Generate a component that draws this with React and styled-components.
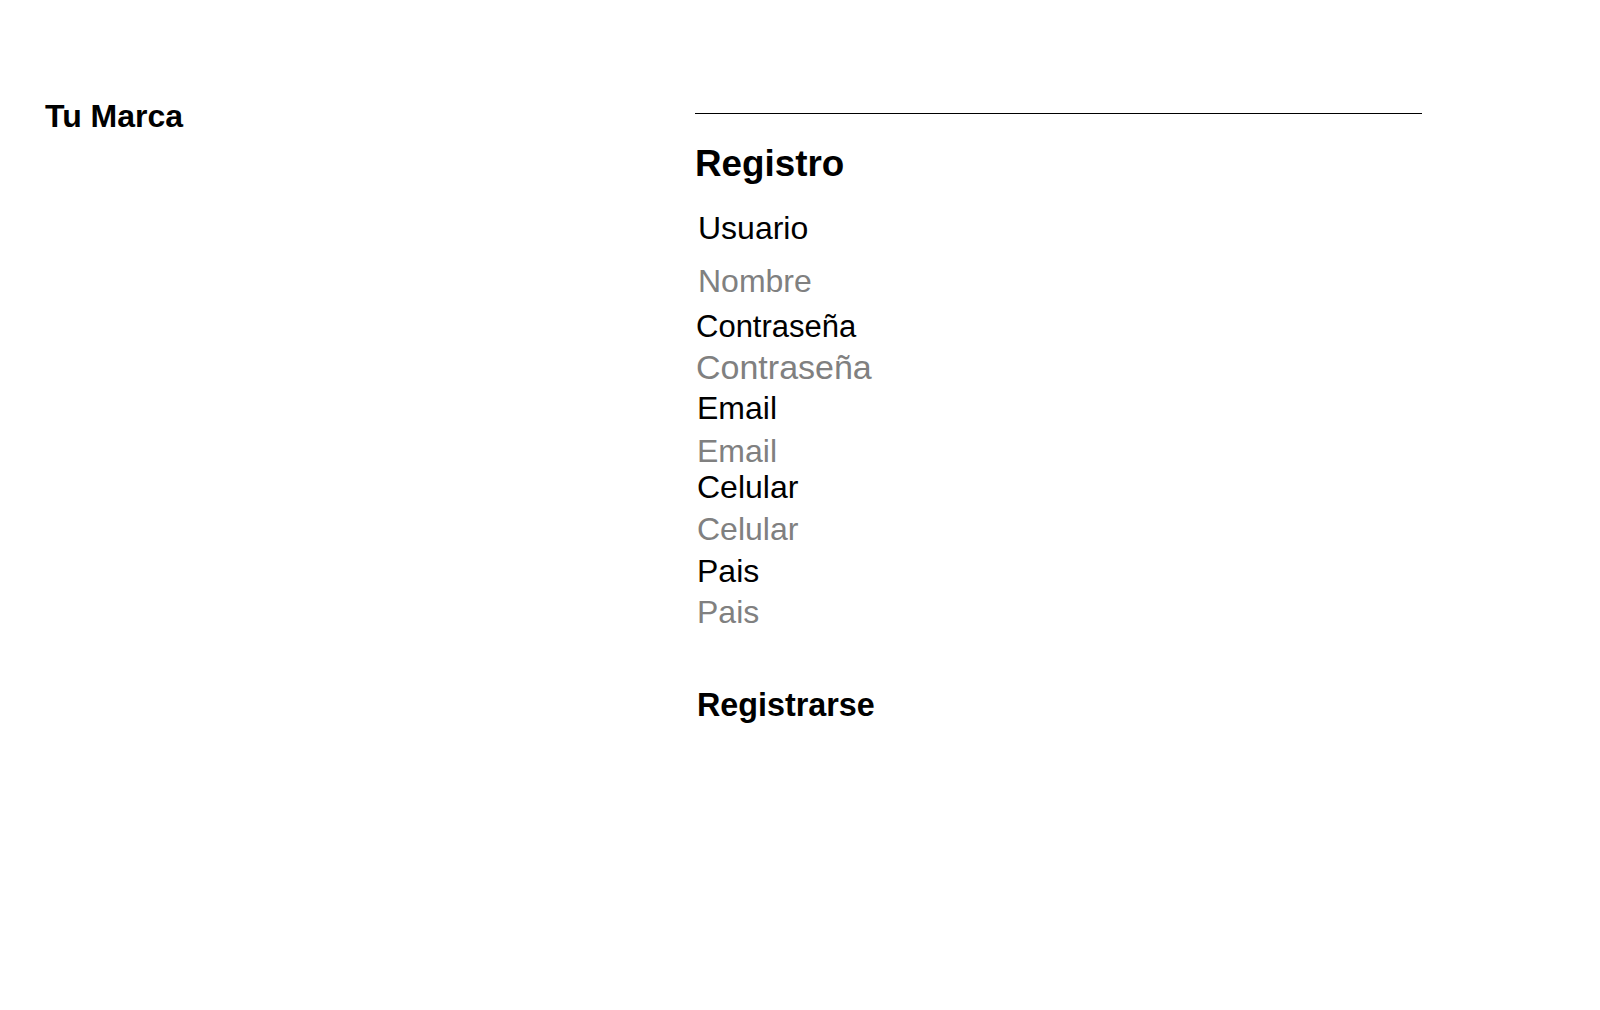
import React from "react";
import styled, { createGlobalStyle } from "styled-components";

const GlobalStyle = createGlobalStyle`
  html, body {
    margin: 0;
    padding: 0;
    background: #ffffff;
  }
  body {
    font-family: "Liberation Sans", Arial, sans-serif;
    color: #000000;
  }
  * { box-sizing: border-box; }
`;

const Page = styled.div`
  display: grid;
  grid-template-columns: 695px 727px;
  min-height: 1010px;
`;

const Brand = styled.header`
  padding: 98px 0 0 45px;
`;

const BrandName = styled.div`
  font-size: 32px;
  line-height: 36px;
  font-weight: 700;
`;

const FormColumn = styled.form`
  margin-top: 113px;
  border-top: 1px solid #000000;
  display: flex;
  flex-direction: column;
  align-items: flex-start;
  align-self: start;
`;

const Title = styled.h2`
  margin: 28px 0 0;
  font-size: 36.8px;
  line-height: 44px;
  font-weight: 700;
`;

const Field = styled.div`
  display: flex;
  flex-direction: column;
  align-items: flex-start;
  margin-top: ${(p) => p.$top}px;
  padding-left: ${(p) => p.$indent ?? 2}px;
  gap: ${(p) => p.$gap}px;
  width: 100%;
`;

const Label = styled.label`
  font-size: ${(p) => p.$size || 32}px;
  line-height: 36px;
  font-weight: 400;
`;

const Input = styled.input`
  display: block;
  width: 100%;
  height: 36px;
  padding: 0;
  margin: 0;
  border: none;
  outline: none;
  background: transparent;
  font-family: "Liberation Sans", Arial, sans-serif;
  font-size: ${(p) => p.$size || 32}px;
  line-height: 36px;
  color: #000000;
  &::placeholder {
    color: #808080;
    opacity: 1;
  }
`;

const SubmitButton = styled.button`
  margin: 57px 0 0 2px;
  padding: 0;
  border: none;
  background: transparent;
  font-family: "Liberation Sans", Arial, sans-serif;
  font-size: 32.3px;
  line-height: 36px;
  height: 36px;
  font-weight: 700;
  color: #000000;
  cursor: pointer;
`;

const fields = [
  { id: "usuario", label: "Usuario", placeholder: "Nombre", top: 24, gap: 17, indent: 3 },
  { id: "password", label: "Contraseña", placeholder: "Contraseña", top: 10, gap: 4, labelSize: 31, size: 34, type: "password", indent: 1 },
  { id: "email", label: "Email", placeholder: "Email", top: 5, gap: 7 },
  { id: "celular", label: "Celular", placeholder: "Celular", top: 0, gap: 6 },
  { id: "pais", label: "Pais", placeholder: "Pais", top: 6, gap: 5 },
];

export default function App() {
  return (
    <>
      <GlobalStyle />
      <Page>
        <Brand>
          <BrandName>Tu Marca</BrandName>
        </Brand>
        <FormColumn onSubmit={(e) => e.preventDefault()}>
          <Title>Registro</Title>
          {fields.map((f) => (
            <Field key={f.id} $top={f.top} $gap={f.gap} $indent={f.indent}>
              <Label htmlFor={f.id} $size={f.labelSize}>{f.label}</Label>
              <Input id={f.id} type={f.type || "text"} placeholder={f.placeholder} $size={f.size} />
            </Field>
          ))}
          <SubmitButton type="submit">Registrarse</SubmitButton>
        </FormColumn>
      </Page>
    </>
  );
}
